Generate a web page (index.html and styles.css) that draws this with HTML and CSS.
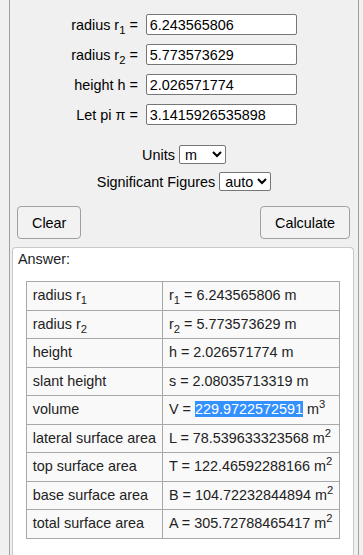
FILE: index.html
```html
<!DOCTYPE html>
<html lang="en">
<head>
    <meta charset="UTF-8">
    <meta name="viewport" content="width=device-width, initial-scale=1.0">
    <title>Frustum Calculator</title>
    <link rel="stylesheet" href="styles.css">
</head>
<body>

    <div class="calc">
        <div class="inputs">
            <label for="r1">radius r<sub>1</sub> =</label>
            <input type="text" id="r1" value="6.243565806">
            <label for="r2">radius r<sub>2</sub> =</label>
            <input type="text" id="r2" value="5.773573629">
            <label for="h">height h =</label>
            <input type="text" id="h" value="2.026571774">
            <label for="pi">Let pi &pi; =</label>
            <input type="text" id="pi" value="3.1415926535898">
        </div>

        <div class="options">
            <div class="option">
                <label for="units">Units</label>
                <select id="units" class="units">
                    <option>m</option>
                </select>
            </div>
            <div class="option">
                <label for="sigfig">Significant Figures</label>
                <select id="sigfig" class="sigfig">
                    <option>auto</option>
                </select>
            </div>
        </div>

        <div class="buttons">
            <button>Clear</button>
            <button>Calculate</button>
        </div>

        <div class="answer">
            <div class="answer-title">Answer:</div>
            <table class="results">
                <tr><td>radius r<sub>1</sub></td><td>r<sub>1</sub> = 6.243565806 m</td></tr>
                <tr><td>radius r<sub>2</sub></td><td>r<sub>2</sub> = 5.773573629 m</td></tr>
                <tr><td>height</td><td>h = 2.026571774 m</td></tr>
                <tr><td>slant height</td><td>s = 2.08035713319 m</td></tr>
                <tr><td>volume</td><td>V = <span class="selected">229.9722572591</span> m<sup>3</sup></td></tr>
                <tr><td>lateral surface area</td><td>L = 78.539633323568 m<sup>2</sup></td></tr>
                <tr><td>top surface area</td><td>T = 122.46592288166 m<sup>2</sup></td></tr>
                <tr><td>base surface area</td><td>B = 104.72232844894 m<sup>2</sup></td></tr>
                <tr><td>total surface area</td><td>A = 305.72788465417 m<sup>2</sup></td></tr>
            </table>
        </div>
    </div>

</body>
</html>
```

FILE: styles.css
```css
* {
    box-sizing: border-box;
}

body {
    margin: 0;
    background-color: #f0f0f0;
    font-family: "Liberation Sans", Arial, sans-serif;
    font-size: 14.4px;
    color: #000;
}

.calc {
    margin-left: 9px;
    width: 350px;
    min-height: 555px;
    border-left: 1px solid #a0a0a0;
    border-right: 1px solid #a0a0a0;
    padding-top: 14px;
}

sub, sup {
    line-height: 0;
    font-size: 78%;
}

/* inputs */
.inputs {
    display: grid;
    grid-template-columns: auto auto;
    justify-content: center;
    align-items: center;
    column-gap: 8px;
    row-gap: 9px;
}

.inputs label {
    text-align: right;
}

.inputs input {
    width: 151px;
    height: 21px;
    padding: 1px 3px;
    border: 1px solid #767676;
    border-radius: 2px;
    background: #fff;
    font-family: inherit;
    font-size: 14.4px;
    color: #000;
}

/* options */
.options {
    margin-top: 20px;
    display: flex;
    flex-direction: column;
    align-items: center;
    gap: 8px;
}

.option {
    display: flex;
    align-items: center;
    gap: 4px;
}

select {
    height: 19px;
    padding: 0 0 0 1px;
    border: 1px solid #767676;
    border-radius: 2px;
    background: #fff;
    font-family: inherit;
    font-size: 14.4px;
    color: #000;
}

.units {
    width: 47px;
}

.sigfig {
    width: 52px;
}

/* buttons */
.buttons {
    margin-top: 15px;
    padding: 0 8px 0 7px;
    display: flex;
    justify-content: space-between;
}

button {
    height: 33px;
    padding: 0 14px;
    border: 1px solid #a0a0a0;
    border-radius: 4px;
    background-color: #f2f2f2;
    font-family: inherit;
    font-size: 14.4px;
    color: #000;
}

/* answer */
.answer {
    margin: 8px 0 0 2px;
    width: 342px;
    min-height: 320px;
    background: #fff;
    border: 1px solid #c8c8c8;
    border-bottom: none;
    border-radius: 4px 4px 0 0;
    padding: 3px 5px;
}

.answer-title {
    color: #222;
    margin-bottom: 14px;
}

.results {
    margin: 0 auto;
    border-collapse: collapse;
    border: 1px solid #a8a8a8;
    color: #222;
}

.results td {
    border: 1px solid #a8a8a8;
    background: #f9f9f9;
    padding: 5px 6px;
    line-height: 17.5px;
    white-space: nowrap;
}

.selected {
    background: #3390ff;
    color: #fff;
}
```
